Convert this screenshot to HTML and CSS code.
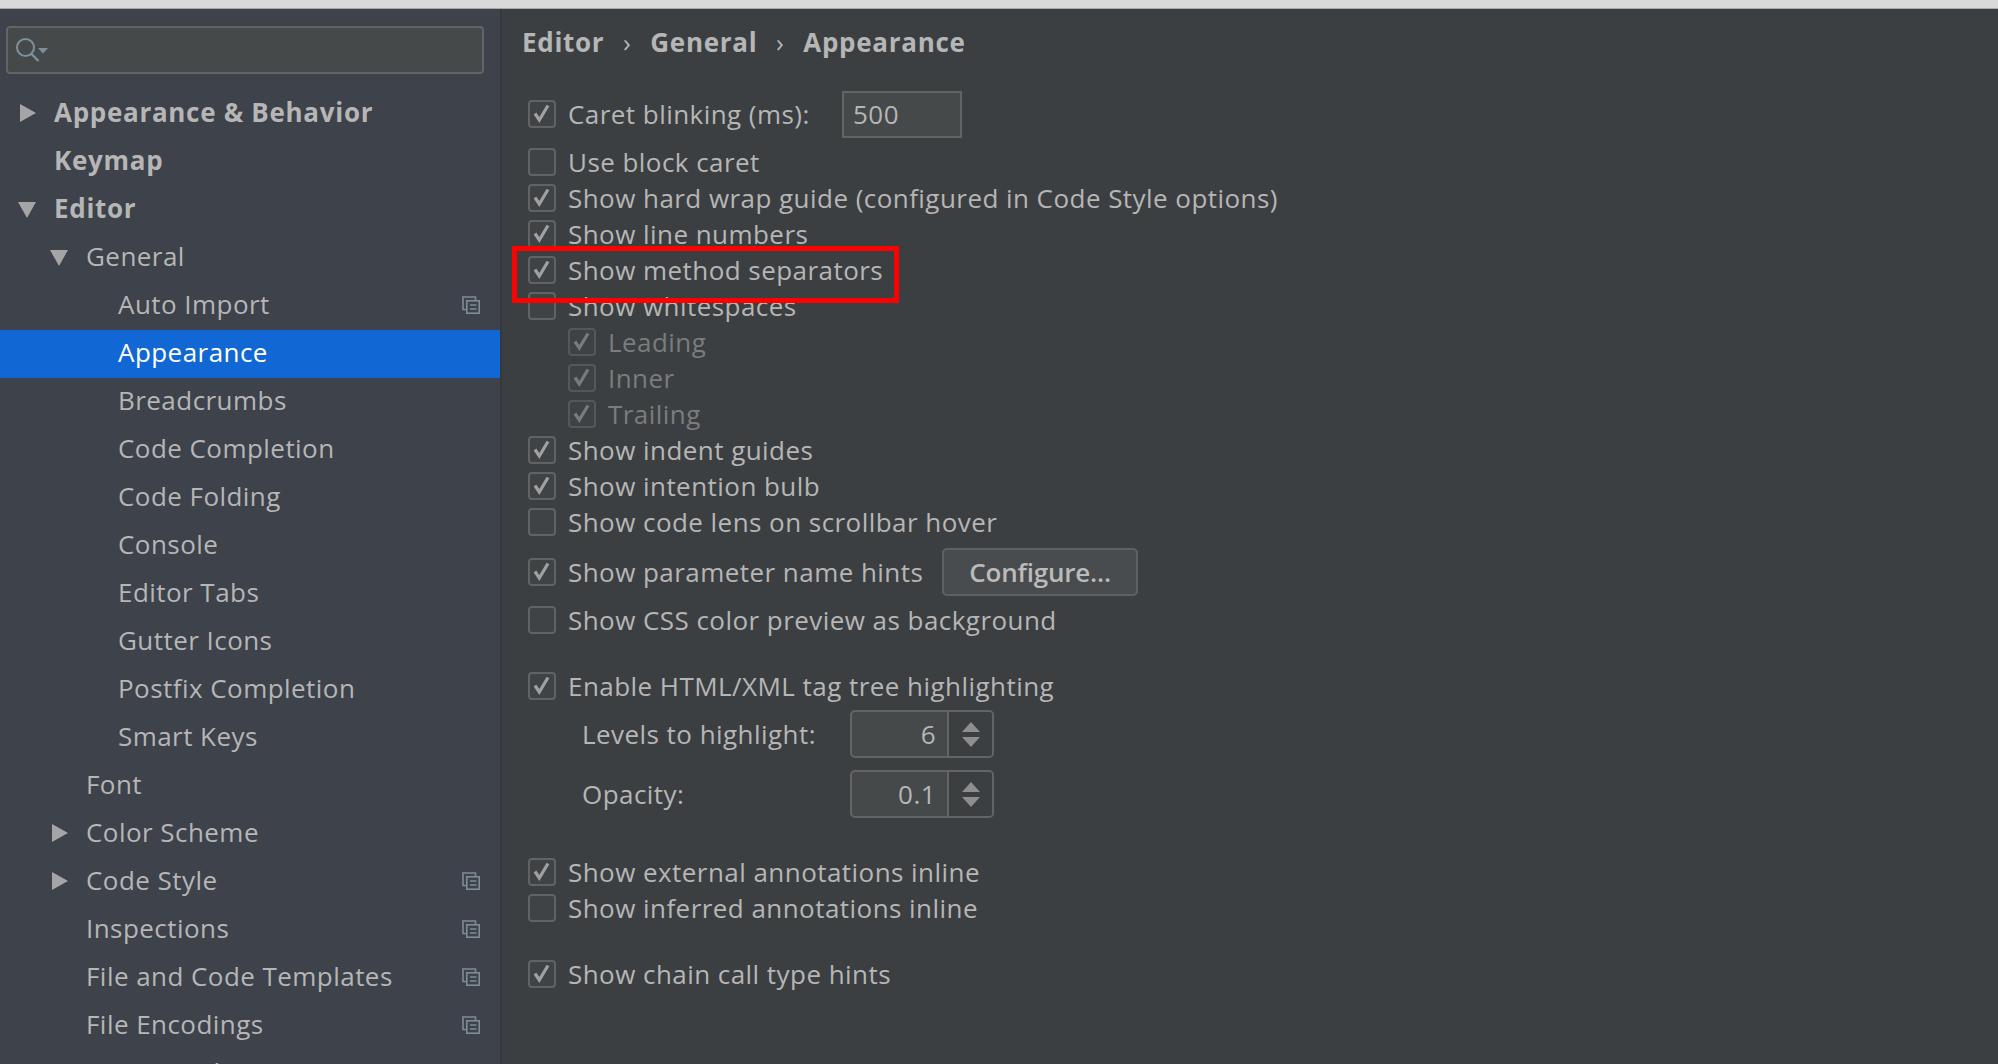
FILE: index.html
```html
<!DOCTYPE html>
<html lang="en">
<head>
<meta charset="utf-8">
<title>Settings - Appearance</title>
<link rel="stylesheet" href="styles.css">
</head>
<body>
<svg class="defs" width="0" height="0" aria-hidden="true">
  <defs>
    <symbol id="proj" viewBox="0 0 18 18">
      <path d="M4.500 13.500H1V1h12.500v3.500" fill="none" stroke="#7f8b96" stroke-width="1.600"/>
      <rect x="4.800" y="4.800" width="12.400" height="12.400" fill="none" stroke="#7f8b96" stroke-width="1.600"/>
      <path d="M8 9h6.500M8 13h6.500" stroke="#7f8b96" stroke-width="1.600"/>
    </symbol>
    <symbol id="right" viewBox="0 0 16 18"><path d="M0 0l16 9L0 18z" fill="#a5a5a5"/></symbol>
    <symbol id="down" viewBox="0 0 18 16"><path d="M0 0h18L9 16z" fill="#a5a5a5"/></symbol>
    <symbol id="check" viewBox="0 0 24 24"><path d="M5 11.500l4.300 6.500L18 3.500" fill="none" stroke="#a0a0a0" stroke-width="3.200"/></symbol>
  </defs>
</svg>
<div class="topbar"></div>
<div class="window">
  <aside class="sidebar">
    <div class="search">
      <svg class="search-icon" width="34" height="26" viewBox="0 0 34 26"><circle cx="10.500" cy="10.500" r="8.500" fill="none" stroke="#7c919d" stroke-width="2"/><path d="M16.500 17l7 7" stroke="#7c919d" stroke-width="2.400"/><path d="M23 11h10l-5 5.500z" fill="#7c919d"/></svg>
    </div>
    <ul class="tree">
      <li class="node l0 bold"><svg class="tw"><use href="#right"/></svg><span>Appearance &amp; Behavior</span></li>
      <li class="node l0 bold"><span>Keymap</span></li>
      <li class="node l0 bold"><svg class="tw tw-d"><use href="#down"/></svg><span>Editor</span></li>
      <li class="node l1"><svg class="tw tw-d"><use href="#down"/></svg><span>General</span></li>
      <li class="node l2"><span>Auto Import</span><svg class="proj"><use href="#proj"/></svg></li>
      <li class="node l2 selected"><span>Appearance</span></li>
      <li class="node l2"><span>Breadcrumbs</span></li>
      <li class="node l2"><span>Code Completion</span></li>
      <li class="node l2"><span>Code Folding</span></li>
      <li class="node l2"><span>Console</span></li>
      <li class="node l2"><span>Editor Tabs</span></li>
      <li class="node l2"><span>Gutter Icons</span></li>
      <li class="node l2"><span>Postfix Completion</span></li>
      <li class="node l2"><span>Smart Keys</span></li>
      <li class="node l1"><span>Font</span></li>
      <li class="node l1"><svg class="tw"><use href="#right"/></svg><span>Color Scheme</span></li>
      <li class="node l1"><svg class="tw"><use href="#right"/></svg><span>Code Style</span><svg class="proj"><use href="#proj"/></svg></li>
      <li class="node l1"><span>Inspections</span><svg class="proj"><use href="#proj"/></svg></li>
      <li class="node l1"><span>File and Code Templates</span><svg class="proj"><use href="#proj"/></svg></li>
      <li class="node l1"><span>File Encodings</span><svg class="proj"><use href="#proj"/></svg></li>
      <li class="node l1"><span>Live Templates</span></li>
    </ul>
  </aside>
  <main class="content">
    <nav class="crumbs"><span>Editor</span><i>›</i><span>General</span><i>›</i><span>Appearance</span></nav>
    <section class="group first">
      <div class="row tall"><span class="cb"><svg><use href="#check"/></svg></span><label class="caret-label">Caret blinking (ms):</label><span class="field">500</span></div>
      <div class="row after-tall"><span class="cb"></span><label>Use block caret</label></div>
      <div class="row"><span class="cb"><svg><use href="#check"/></svg></span><label>Show hard wrap guide (configured in Code Style options)</label></div>
      <div class="row"><span class="cb"><svg><use href="#check"/></svg></span><label>Show line numbers</label></div>
      <div class="row"><span class="cb"><svg><use href="#check"/></svg></span><label>Show method separators</label></div>
      <div class="row"><span class="cb"></span><label>Show whitespaces</label></div>
      <div class="row sub dim"><span class="cb"><svg><use href="#check"/></svg></span><label>Leading</label></div>
      <div class="row sub dim"><span class="cb"><svg><use href="#check"/></svg></span><label>Inner</label></div>
      <div class="row sub dim"><span class="cb"><svg><use href="#check"/></svg></span><label>Trailing</label></div>
      <div class="row"><span class="cb"><svg><use href="#check"/></svg></span><label>Show indent guides</label></div>
      <div class="row"><span class="cb"><svg><use href="#check"/></svg></span><label>Show intention bulb</label></div>
      <div class="row"><span class="cb"></span><label>Show code lens on scrollbar hover</label></div>
      <div class="row btn-row"><span class="cb"><svg><use href="#check"/></svg></span><label class="hints-label">Show parameter name hints</label><button class="btn" type="button">Configure...</button></div>
      <div class="row after-btn"><span class="cb"></span><label>Show CSS color preview as background</label></div>
    </section>
    <section class="group html">
      <div class="row"><span class="cb"><svg><use href="#check"/></svg></span><label>Enable HTML/XML tag tree highlighting</label></div>
      <div class="spin-row one"><label>Levels to highlight:</label><div class="spinner"><span class="val">6</span><span class="arrows"><svg width="18" height="25" viewBox="0 0 18 25"><path d="M9 0l9 10H0zM0 15h18L9 25z" fill="#8e8e8e"/></svg></span></div></div>
      <div class="spin-row two"><label>Opacity:</label><div class="spinner"><span class="val">0.1</span><span class="arrows"><svg width="18" height="25" viewBox="0 0 18 25"><path d="M9 0l9 10H0zM0 15h18L9 25z" fill="#8e8e8e"/></svg></span></div></div>
    </section>
    <section class="group annot">
      <div class="row"><span class="cb"><svg><use href="#check"/></svg></span><label>Show external annotations inline</label></div>
      <div class="row"><span class="cb"></span><label>Show inferred annotations inline</label></div>
    </section>
    <section class="group chain">
      <div class="row"><span class="cb"><svg><use href="#check"/></svg></span><label>Show chain call type hints</label></div>
    </section>
    <div class="highlight"></div>
  </main>
</div>
</body>
</html>
```
FILE: styles.css
```css
* { box-sizing: border-box; }
html, body { margin: 0; height: 100%; overflow: hidden; }
body { font-family: "Open Sans", "Noto Sans", sans-serif; font-size: 26px; color: #b6b6b6; background: #3c3f41; }
.defs { position: absolute; }
.topbar { height: 9px; background: #d9d9d9; border-bottom: 1px solid #a8a8a8; }
.window { display: flex; height: 1055px; }
.sidebar { width: 502px; flex: none; background: #3d424b; border-right: 2px solid #35383d; overflow: hidden; padding-top: 17px; }
.search { margin-left: 6px; width: 478px; height: 48px; background: #45494a; border: 2px solid #626466; border-radius: 4px; display: flex; align-items: center; padding-left: 7px; }
.tree { list-style: none; margin: 16px 0 0; padding: 0; }
.node { height: 48px; padding-bottom: 4px; display: flex; align-items: center; position: relative; white-space: nowrap; letter-spacing: 0.45px; }
.node.bold { font-weight: 700; letter-spacing: 0.7px; }
.l0 { padding-left: 54px; }
.l1 { padding-left: 86px; }
.l2 { padding-left: 118px; }
.tw { position: absolute; width: 16px; height: 18px; top: 14px; }
.tw-d { width: 18px; height: 16px; top: 16px; }
.l0 .tw { left: 20px; }
.l1 .tw { left: 52px; }
.l0 .tw-d { left: 18px; }
.l1 .tw-d { left: 50px; }
.selected { background: #1167d3; color: #ffffff; }
.proj { position: absolute; width: 18px; height: 18px; left: 462px; top: 14px; }
.content { flex: 1; position: relative; padding: 0 0 0 26px; overflow: hidden; }
.crumbs { display: flex; align-items: center; height: 34px; margin: 16px 0 0 -6px; font-weight: 700; letter-spacing: 0.7px; }
.crumbs i { font-style: normal; font-weight: 400; width: 46px; text-align: center; }
.group.first { margin-top: 32px; }
.row { height: 36px; display: flex; align-items: center; white-space: nowrap; letter-spacing: 0.45px; }
.row label { margin-left: 12px; }
.row label.caret-label { width: 274px; flex: none; }
.row label.hints-label { width: 374px; flex: none; }
.row.tall { height: 46px; }
.row.after-tall { margin-top: 7px; }
.row.btn-row { height: 48px; margin-top: 8px; }
.row.after-btn { margin-top: 6px; }
.row.sub { padding-left: 40px; }
.dim { color: #7a7c7e; }
.cb { width: 28px; height: 28px; flex: none; background: #3f4345; border: 2px solid #5f6365; border-radius: 4px; display: block; overflow: hidden; }
.cb svg { display: block; width: 24px; height: 24px; }
.dim .cb { border-color: #54585a; }
.dim .cb svg { opacity: .6; }
.field { width: 120px; height: 47px; background: #45494a; border: 2px solid #646464; display: flex; align-items: center; padding-left: 9px; }
.btn { width: 196px; height: 48px; background: #484c4e; border: 2px solid #5d6163; border-radius: 5px; color: #bbbbbb; font: 600 26px "Open Sans", sans-serif; letter-spacing: -0.2px; padding: 0; }
.group.html { margin-top: 30px; }
.spin-row { display: flex; align-items: center; height: 48px; padding-left: 54px; letter-spacing: 0.45px; white-space: nowrap; }
.spin-row label { width: 268px; flex: none; }
.spin-row.one { margin-top: 6px; }
.spin-row.two { margin-top: 12px; }
.spinner { width: 144px; height: 48px; background: #45494a; border: 2px solid #646464; border-radius: 5px; display: flex; overflow: hidden; }
.val { flex: 1; text-align: right; padding-right: 11px; line-height: 44px; border-right: 2px solid #646464; }
.arrows { width: 43px; flex: none; display: flex; align-items: center; justify-content: center; background: #3c3f41; }
.group.annot { margin-top: 36px; }
.group.chain { margin-top: 30px; }
.highlight { position: absolute; left: 10px; top: 237px; width: 387px; height: 57px; border: 5px solid #ff0000; }
```
